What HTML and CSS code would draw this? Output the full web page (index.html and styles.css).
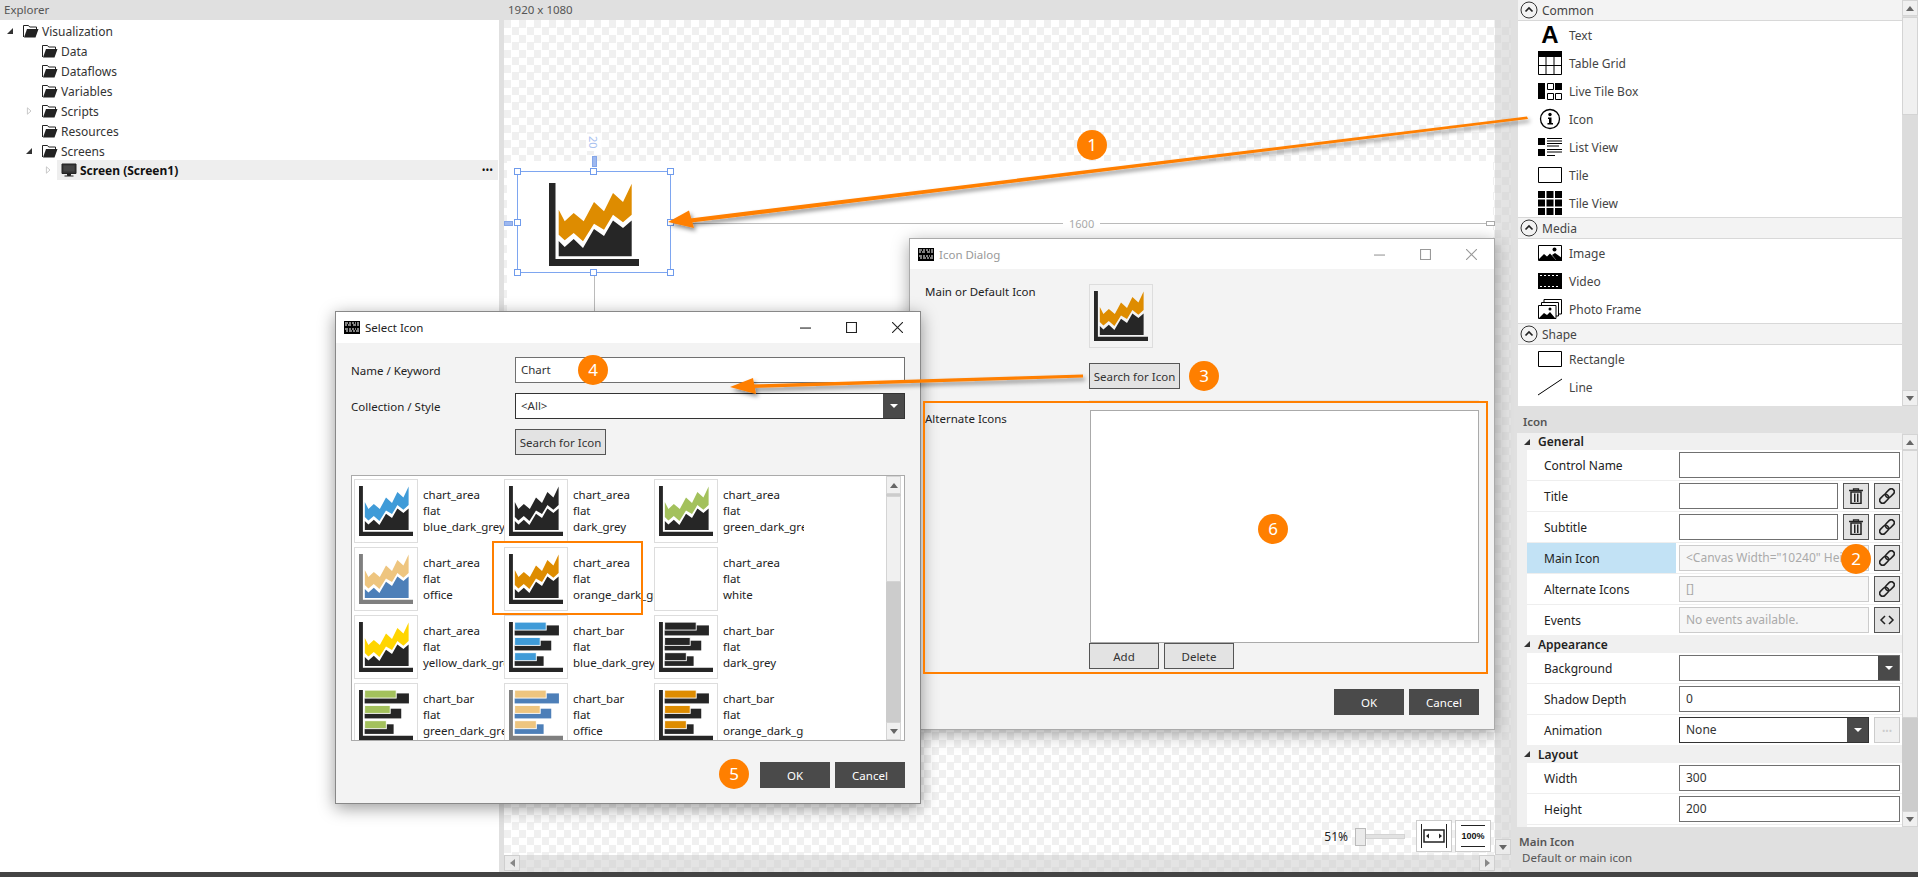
FILE: index.html
```html
<!DOCTYPE html>
<html lang="en">
<head>
  <meta charset="UTF-8">
  <title>Icon Dialog</title>
  <link rel="stylesheet" href="styles.css">
</head>
<body>
  <svg class="defs" width="0" height="0">
    <symbol id="chart-area" viewBox="0 0 90 83">
      <path class="c-axis" d="M0 0h6.5v76H90v7H0z"/>
      <path class="c-top" d="M9.7 26.7l6 11.6 9-8.3 10 8.3L45 19l10 9.3L64 10l10 9 8.7-18.3v31L74 39.3l-10-7.600-9 15-10-6-11 17.600-9.300-8.300-9 7.300-6-5.600z"/>
      <path class="c-base" d="M9.7 58l6 6 9-8 9.300 9L45 46l10 7 9-15.500L74 45l8.700-7.500v35.800H9.700z"/>
    </symbol>
    <symbol id="chart-bar" viewBox="0 0 90 83">
      <path class="c-axis" d="M0 0h6.5v76H90v7H0z"/>
      <rect class="c-base" x="9.4" y="5.5" width="73.8" height="16.7"/>
      <rect class="c-base" x="9.4" y="31" width="61" height="16.2"/>
      <rect class="c-base" x="9.4" y="57" width="48.3" height="16"/>
      <rect class="c-top c-edge" x="9.4" y="0" width="52.6" height="13.3"/>
      <rect class="c-top c-edge" x="9.4" y="25.5" width="42.6" height="13.3"/>
      <rect class="c-top c-edge" x="9.4" y="51" width="36.1" height="13.3"/>
    </symbol>
    <symbol id="folder" viewBox="0 0 16 14">
      <path d="M.5 13V1.500h5l1.200 1.500h6.800v2" fill="none" stroke="#222"/>
      <path d="M4 5h11.500l-3 8.500H1z" fill="#222"/>
    </symbol>
    <symbol id="logo" viewBox="0 0 16 13">
      <rect width="16" height="13" fill="#000"/>
      <path d="M1 2h3M5 2h2M8 2h2M11 2h1M13 2h2M1 4h2M4 4h3M9 4h3M13 4h2M1 8h3M5 8h2M8 8h2M11 8h1M13 8h2M2 10h2M5 10h3M9 10h2M12 10h3" stroke="#fff" fill="none"/>
    </symbol>
    <symbol id="link" viewBox="0 0 16 16">
      <g transform="rotate(-45 8 8)" fill="none" stroke="#222" stroke-width="1.6">
        <rect x="-1" y="5" width="10" height="6" rx="3"/>
        <rect x="7" y="5" width="10" height="6" rx="3"/>
      </g>
    </symbol>
    <symbol id="trash" viewBox="0 0 16 16">
      <path d="M1 2.500h14M5.500 2V.8h5V2" fill="none" stroke="#222" stroke-width="1.3"/>
      <path d="M3 4h10v11.500H3z" fill="none" stroke="#222" stroke-width="1.5"/>
      <path d="M6 5.500h1.500v8.500H6zM9 5.500h1.500v8.500H9z" fill="#222"/>
    </symbol>
    <symbol id="chevron" viewBox="0 0 18 18">
      <circle cx="9" cy="9" r="8" fill="none" stroke="#333"/>
      <path d="M5.500 10.500L9 7l3.500 3.500" fill="none" stroke="#222" stroke-width="1.7"/>
    </symbol>
    <symbol id="arrow-open" viewBox="0 0 8 8"><path d="M7 1v6H1z" fill="#333"/></symbol>
    <symbol id="arrow-closed" viewBox="0 0 8 10"><path d="M2 1l4.500 4L2 9z" fill="#fff" stroke="#bbb"/></symbol>
  </svg>

  <div class="app">
    <section class="explorer">
      <div class="pane-title">Explorer</div>
      <ul class="tree">
        <li class="node"><svg class="exp"><use href="#arrow-open"/></svg><svg class="folder"><use href="#folder"/></svg>Visualization</li>
        <li class="node d1"><span class="exp"></span><svg class="folder"><use href="#folder"/></svg>Data</li>
        <li class="node d1"><span class="exp"></span><svg class="folder"><use href="#folder"/></svg>Dataflows</li>
        <li class="node d1"><span class="exp"></span><svg class="folder"><use href="#folder"/></svg>Variables</li>
        <li class="node d1"><svg class="exp"><use href="#arrow-closed"/></svg><svg class="folder"><use href="#folder"/></svg>Scripts</li>
        <li class="node d1"><span class="exp"></span><svg class="folder"><use href="#folder"/></svg>Resources</li>
        <li class="node d1"><svg class="exp"><use href="#arrow-open"/></svg><svg class="folder"><use href="#folder"/></svg>Screens</li>
        <li class="node d2">
          <svg class="exp"><use href="#arrow-closed"/></svg>
          <div class="node-sel">
            <svg class="monitor" viewBox="0 0 16 14"><path d="M1 1h14v9.500H1z" fill="#333" stroke="#222"/><path d="M2.500 2.500h11v6h-11z" fill="#444"/><path d="M6.500 11h3v1.500h-3zM3.500 13h9" stroke="#222" fill="#222"/></svg>
            <b>Screen (Screen1)</b>
            <span class="dots">•••</span>
          </div>
        </li>
      </ul>
    </section>

    <section class="center">
      <div class="pane-title">1920 x 1080</div>
      <div class="stage">
        <div class="artboard"></div>
        <span class="guide-label">20</span>
        <span class="pill pill-top"></span>
        <span class="pill pill-left"></span>
        <span class="rule rule-h"></span>
        <span class="rule rule-v"></span>
        <span class="rule-text">1600</span>
        <span class="pill pill-right"></span>
        <div class="selection">
          <i class="h h-tl"></i><i class="h h-tc"></i><i class="h h-tr"></i>
          <i class="h h-ml"></i><i class="h h-mr"></i>
          <i class="h h-bl"></i><i class="h h-bc"></i><i class="h h-br"></i>
        </div>
        <svg class="chart chart-main c-orange"><use href="#chart-area"/></svg>

        <div class="zoombar">
          <span class="zoom-val">51%</span>
          <div class="slider"><span class="slider-thumb"></span></div>
          <div class="zoom-btn">
            <svg width="26" height="26" viewBox="0 0 26 26"><path d="M.5 1v24M25.500 1v24" stroke="#222"/><rect x="3" y="7" width="20" height="12" fill="#fff" stroke="#222" stroke-width="1.5"/><path d="M5 13l3-2.500v5zM21 13l-3-2.500v5z" fill="#222"/></svg>
          </div>
          <div class="zoom-btn zoom-full">100%</div>
        </div>

        <div class="hbar"><span class="sb-btn"><i class="tri tri-l"></i></span><span class="sb-btn"><i class="tri tri-r"></i></span></div>
        <div class="vbar"><span class="sb-btn"><i class="tri tri-d"></i></span></div>
      </div>
    </section>

    <aside class="side">
      <div class="toolbox">
        <div class="tool-list">
          <div class="tool-head"><svg class="chev"><use href="#chevron"/></svg>Common</div>
          <div class="tool"><span class="tool-a">A</span>Text</div>
          <div class="tool"><svg class="tool-ico" viewBox="0 0 24 24"><path d="M0 0h24v6H0z"/><path d="M.5 6v17.500h23V6M8 6v17.500M16 6v17.500M.5 14.500h23" fill="none" stroke="#000"/></svg>Table Grid</div>
          <div class="tool"><svg class="tool-ico" viewBox="0 0 24 24"><path d="M0 4h7v16H0z"/><path d="M9.500 4.500h6v6h-6zM9.500 14.500h6v6h-6zM17.500 14.500h6v6h-6z" fill="none" stroke="#000"/><path d="M17 4h7v7h-7z"/></svg>Live Tile Box</div>
          <div class="tool"><svg class="tool-ico" viewBox="0 0 24 24"><circle cx="12" cy="12" r="9.500" fill="none" stroke="#000" stroke-width="1.3"/><circle cx="12" cy="7.500" r="1.7"/><path d="M10 10.500h3.500V16H15v1.500H9.500V16H11v-4h-1z"/></svg>Icon</div>
          <div class="tool"><svg class="tool-ico" viewBox="0 0 24 24"><path d="M0 3h7v7H0zM0 14h7v7H0z"/><path d="M9 3.500h15M9 6h15M9 8.500h15M9 11h12M9 14.500h15M9 17h15M9 20.500h8" fill="none" stroke="#000"/></svg>List View</div>
          <div class="tool"><svg class="tool-ico" viewBox="0 0 24 24"><path d="M.5 4.500h23v15H.5z" fill="none" stroke="#000"/></svg>Tile</div>
          <div class="tool"><svg class="tool-ico" viewBox="0 0 24 24"><path d="M0 0h7v7H0zM8.500 0h7v7h-7zM17 0h7v7h-7zM0 8.500h7v7H0zM8.500 8.500h7v7h-7zM17 8.500h7v7h-7zM0 17h7v7H0zM8.500 17h7v7h-7zM17 17h7v7h-7z"/></svg>Tile View</div>
          <div class="tool-head"><svg class="chev"><use href="#chevron"/></svg>Media</div>
          <div class="tool"><svg class="tool-ico" viewBox="0 0 24 24"><path d="M.5 4.500h23v15H.5z" fill="none" stroke="#000"/><path d="M0 19l6-6 3 2.500 3-3 6 6.500H0z"/><circle cx="16.500" cy="8.500" r="2"/><path d="M14 14l3-2 7 5v3h-5z"/></svg>Image</div>
          <div class="tool"><svg class="tool-ico" viewBox="0 0 24 24"><path d="M0 4h24v16H0z"/><path d="M2 6.500h2M6 6.500h2M10 6.500h2M14 6.500h2M18 6.500h2M2 17.500h2M6 17.500h2M10 17.500h2M14 17.500h2M18 17.500h2" stroke="#fff" fill="none"/></svg>Video</div>
          <div class="tool"><svg class="tool-ico" viewBox="0 0 24 24"><path d="M6 5V2.500h17.500V17H21" fill="none" stroke="#000"/><path d="M3.500 8V5.500h17V19H18" fill="none" stroke="#000"/><path d="M.5 8.500h17.500v13H.5z" fill="#fff" stroke="#000"/><path d="M1 21l5-5 3 2 3-3 5 6z"/><circle cx="12" cy="12" r="1.5"/></svg>Photo Frame</div>
          <div class="tool-head"><svg class="chev"><use href="#chevron"/></svg>Shape</div>
          <div class="tool"><svg class="tool-ico" viewBox="0 0 24 24"><path d="M.5 4.500h23v15H.5z" fill="none" stroke="#000"/></svg>Rectangle</div>
          <div class="tool"><svg class="tool-ico" viewBox="0 0 24 24"><path d="M0 20L24 4" fill="none" stroke="#000"/></svg>Line</div>
        </div>
        <div class="vscroll">
          <span class="sb-btn"><i class="tri tri-u"></i></span>
          <span class="sb-thumb thumb-tools"></span>
          <span class="sb-track"></span>
          <span class="sb-btn"><i class="tri tri-d"></i></span>
        </div>
      </div>

      <div class="props-title">Icon</div>
      <div class="props">
        <div class="props-body">
          <div class="cat"><svg class="cat-arrow"><use href="#arrow-open"/></svg>General</div>
          <div class="row"><label>Control Name</label><div class="val"><div class="field"></div></div></div>
          <div class="row"><label>Title</label><div class="val"><div class="field"></div><span class="sq"><svg><use href="#trash"/></svg></span><span class="sq"><svg><use href="#link"/></svg></span></div></div>
          <div class="row"><label>Subtitle</label><div class="val"><div class="field"></div><span class="sq"><svg><use href="#trash"/></svg></span><span class="sq"><svg><use href="#link"/></svg></span></div></div>
          <div class="row row-on"><label>Main Icon</label><div class="val"><div class="field off">&lt;Canvas Width="10240" Heig</div><span class="sq"><svg><use href="#link"/></svg></span></div></div>
          <div class="row"><label>Alternate Icons</label><div class="val"><div class="field off">[]</div><span class="sq"><svg><use href="#link"/></svg></span></div></div>
          <div class="row row-last"><label>Events</label><div class="val"><div class="field off">No events available.</div><span class="sq"><svg viewBox="0 0 16 16"><path d="M6 4L2 8l4 4M10 4l4 4-4 4" fill="none" stroke="#222" stroke-width="1.5"/></svg></span></div></div>
          <div class="cat cat-tall"><svg class="cat-arrow"><use href="#arrow-open"/></svg>Appearance</div>
          <div class="row"><label>Background</label><div class="val"><div class="field field-drop"><span class="drop"><i class="tri-w"></i></span></div></div></div>
          <div class="row"><label>Shadow Depth</label><div class="val"><div class="field">0</div></div></div>
          <div class="row row-last"><label>Animation</label><div class="val"><div class="field field-drop field-dark">None<span class="drop"><i class="tri-w"></i></span></div><span class="sq sq-off">•••</span></div></div>
          <div class="cat cat-tall"><svg class="cat-arrow"><use href="#arrow-open"/></svg>Layout</div>
          <div class="row"><label>Width</label><div class="val"><div class="field">300</div></div></div>
          <div class="row"><label>Height</label><div class="val"><div class="field">200</div></div></div>
          <div class="row"><label></label><div class="val"><div class="field"></div></div></div>
        </div>
        <div class="vscroll vscroll-props">
          <span class="sb-btn"><i class="tri tri-u"></i></span>
          <span class="sb-thumb thumb-props"></span>
          <span class="sb-track"></span>
          <span class="sb-btn"><i class="tri tri-d"></i></span>
        </div>
      </div>
      <div class="help">
        <strong>Main Icon</strong>
        <span>Default or main icon</span>
      </div>
    </aside>
  </div>
  <div class="statusbar"></div>

  <!-- Icon Dialog, behind -->
  <div class="dialog dialog-icon">
    <header class="titlebar titlebar-off">
      <svg class="logo"><use href="#logo"/></svg>
      <span class="title-text">Icon Dialog</span>
      <div class="winctl">
        <svg viewBox="0 0 10 10"><path d="M0 5.500h10" stroke="currentColor"/></svg>
        <svg viewBox="0 0 10 10"><path d="M.5.500h9v9h-9z" fill="none" stroke="currentColor"/></svg>
        <svg viewBox="0 0 10 10"><path d="M0 0l10 10M10 0L0 10" stroke="currentColor"/></svg>
      </div>
    </header>
    <div class="icon-body">
      <div class="icon-main">
        <span class="lbl">Main or Default Icon</span>
        <div class="main-col">
          <div class="thumb thumb-gray"><svg class="chart c-orange"><use href="#chart-area"/></svg></div>
          <button class="btn btn-search">Search for Icon</button>
        </div>
      </div>
      <div class="icon-alt">
        <span class="lbl">Alternate Icons</span>
        <div class="alt-list"></div>
        <div class="alt-btns"><button class="btn btn-wide">Add</button><button class="btn btn-wide">Delete</button></div>
      </div>
      <div class="dlg-actions"><button class="btn-dark">OK</button><button class="btn-dark">Cancel</button></div>
    </div>
  </div>

  <!-- Select Icon, in front -->
  <div class="dialog dialog-select">
    <header class="titlebar">
      <svg class="logo"><use href="#logo"/></svg>
      <span class="title-text">Select Icon</span>
      <div class="winctl">
        <svg viewBox="0 0 10 10"><path d="M0 5.500h10" stroke="currentColor"/></svg>
        <svg viewBox="0 0 10 10"><path d="M.5.500h9v9h-9z" fill="none" stroke="currentColor"/></svg>
        <svg viewBox="0 0 10 10"><path d="M0 0l10 10M10 0L0 10" stroke="currentColor"/></svg>
      </div>
    </header>
    <div class="select-body">
      <div class="select-form">
        <span class="lbl">Name / Keyword</span>
        <div class="field">Chart</div>
        <span class="lbl">Collection / Style</span>
        <div class="field field-drop field-dark">&lt;All&gt;<span class="drop"><i class="tri-w"></i></span></div>
        <span></span>
        <div><button class="btn btn-search">Search for Icon</button></div>
      </div>
      <div class="results">
        <div class="result-grid">
          <div class="item"><div class="thumb"><svg class="chart c-blue"><use href="#chart-area"/></svg></div><p>chart_area<br>flat<br>blue_dark_grey</p></div>
          <div class="item"><div class="thumb"><svg class="chart c-dark"><use href="#chart-area"/></svg></div><p>chart_area<br>flat<br>dark_grey</p></div>
          <div class="item"><div class="thumb"><svg class="chart c-green"><use href="#chart-area"/></svg></div><p>chart_area<br>flat<br>green_dark_grey</p></div>
          <div class="item"><div class="thumb"><svg class="chart c-office"><use href="#chart-area"/></svg></div><p>chart_area<br>flat<br>office</p></div>
          <div class="item"><div class="thumb"><svg class="chart c-orange"><use href="#chart-area"/></svg></div><p>chart_area<br>flat<br>orange_dark_grey</p></div>
          <div class="item"><div class="thumb"></div><p>chart_area<br>flat<br>white</p></div>
          <div class="item"><div class="thumb"><svg class="chart c-yellow"><use href="#chart-area"/></svg></div><p>chart_area<br>flat<br>yellow_dark_grey</p></div>
          <div class="item"><div class="thumb"><svg class="chart c-blue"><use href="#chart-bar"/></svg></div><p>chart_bar<br>flat<br>blue_dark_grey</p></div>
          <div class="item"><div class="thumb"><svg class="chart c-dark"><use href="#chart-bar"/></svg></div><p>chart_bar<br>flat<br>dark_grey</p></div>
          <div class="item"><div class="thumb"><svg class="chart c-green"><use href="#chart-bar"/></svg></div><p>chart_bar<br>flat<br>green_dark_grey</p></div>
          <div class="item"><div class="thumb"><svg class="chart c-office"><use href="#chart-bar"/></svg></div><p>chart_bar<br>flat<br>office</p></div>
          <div class="item"><div class="thumb"><svg class="chart c-orange"><use href="#chart-bar"/></svg></div><p>chart_bar<br>flat<br>orange_dark_grey</p></div>
        </div>
        <div class="vscroll vscroll-results">
          <span class="sb-btn"><i class="tri tri-u"></i></span>
          <span class="sb-thumb thumb-results"></span>
          <span class="sb-track"></span>
          <span class="sb-btn"><i class="tri tri-d"></i></span>
        </div>
      </div>
      <div class="dlg-actions"><button class="btn-dark">OK</button><button class="btn-dark">Cancel</button></div>
    </div>
  </div>

  <!-- orange annotations over the screenshot -->
  <div class="mark mark-item"></div>
  <div class="mark mark-alt"></div>
  <svg class="arrows" viewBox="0 0 1918 877">
    <defs>
      <filter id="soft" x="-5%" y="-30%" width="110%" height="170%">
        <feDropShadow dx="2" dy="3" stdDeviation="2" flood-color="#000" flood-opacity=".45"/>
      </filter>
    </defs>
    <g class="arrow" filter="url(#soft)">
      <path d="M1527 116.500L690 218.500l1.500 4L1528 119z"/>
      <path d="M668 222l21-11.500 5 17.500z"/>
    </g>
    <g class="arrow" filter="url(#soft)">
      <path d="M1083 374.500L752 384.500v3.500L1083 377.500z"/>
      <path d="M730 387l23-9 3 16z"/>
    </g>
  </svg>
  <span class="badge b1">1</span>
  <span class="badge b2">2</span>
  <span class="badge b3">3</span>
  <span class="badge b4">4</span>
  <span class="badge b5">5</span>
  <span class="badge b6">6</span>
</body>
</html>
```

FILE: styles.css
```css
html, body {
  margin: 0;
  padding: 0;
  height: 877px;
  overflow: hidden;
  background: #e0e0e0;
  font-family: "Noto Sans", "Liberation Sans", sans-serif;
  font-size: 11.5px;
  color: #222;
}

.defs {
  position: absolute;
}

.app {
  display: flex;
  height: 872px;
}

.statusbar {
  height: 5px;
  background: #444;
}

.pane-title {
  height: 20px;
  line-height: 20px;
  padding-left: 4px;
  color: #555;
  background: #e0e0e0;
}

/* explorer */
.explorer {
  width: 499px;
  background: #fff;
  margin-right: 5px;
}

.tree {
  list-style: none;
  margin: 0;
  padding: 0;
}

.node {
  display: flex;
  align-items: center;
  height: 20px;
  padding: 2px 0 0 6px;
  box-sizing: border-box;
  font-size: 12px;
  color: #333;
}

.node.d1 { padding-left: 25px; }
.node.d2 { padding-left: 44px; padding-top: 0; }

.exp {
  width: 8px;
  height: 8px;
  margin-right: 9px;
  flex: none;
}

.folder {
  width: 16px;
  height: 14px;
  margin-right: 3px;
  flex: none;
}

.d2 .exp {
  margin-right: 5px;
}

.node-sel {
  flex: 1;
  display: flex;
  align-items: center;
  height: 20px;
  margin-right: 1px;
  padding-left: 4px;
  background: #eee;
  color: #111;
}

.monitor {
  width: 16px;
  height: 14px;
  margin-right: 3px;
}

.dots {
  margin-left: auto;
  margin-right: 5px;
  font-size: 10px;
}

/* canvas */
.center {
  width: 1007px;
  margin-right: 1px;
  display: flex;
  flex-direction: column;
}

.stage {
  flex: 1;
  position: relative;
  overflow: hidden;
  background: conic-gradient(#fff 25%, #f0f0f0 0 50%, #fff 0 75%, #f0f0f0 0) 0 0 / 15px 15px;
}

.artboard {
  position: absolute;
  left: 3px;
  top: 141px;
  width: 986px;
  height: 556px;
  background: #fff;
}

.guide-label {
  position: absolute;
  left: 83px;
  top: 114px;
  width: 14px;
  padding: 2px 0;
  text-align: center;
  font-size: 11px;
  color: #a9c2ef;
  writing-mode: vertical-rl;
  background: #fff;
}

.pill {
  position: absolute;
  background: #9db8ef;
  border: 1px solid #84a5e8;
  box-sizing: border-box;
}

.pill-top { left: 88px; top: 136px; width: 5px; height: 11px; }
.pill-left { left: 0; top: 201px; width: 9px; height: 5px; }
.pill-right { left: 982px; top: 201px; width: 9px; height: 5px; background: #fff; border-color: #aaa; }

.rule {
  position: absolute;
  background: #bbb;
}

.rule-h { left: 167px; top: 203px; width: 815px; height: 1px; }
.rule-v { left: 90px; top: 253px; width: 1px; height: 60px; }

.rule-text {
  position: absolute;
  left: 559px;
  top: 196px;
  padding: 0 6px;
  font-size: 11px;
  color: #aaa;
  background: #fff;
}

.selection {
  position: absolute;
  left: 13px;
  top: 151px;
  width: 152px;
  height: 100px;
  border: 1px solid #7ea6f0;
}

.h {
  position: absolute;
  box-sizing: border-box;
  width: 7px;
  height: 7px;
  background: #fff;
  border: 1px solid #6f9bec;
}

.h-tl, .h-ml, .h-bl { left: -4px; }
.h-tc, .h-bc { left: 72px; }
.h-tr, .h-mr, .h-br { right: -4px; }
.h-tl, .h-tc, .h-tr { top: -4px; }
.h-ml, .h-mr { top: 47px; }
.h-bl, .h-bc, .h-br { bottom: -4px; }

.chart {
  display: block;
  width: 54px;
  height: 50px;
}

.chart-main {
  position: absolute;
  left: 45px;
  top: 163px;
  width: 90px;
  height: 83px;
}

.c-axis { fill: var(--axis, #262626); }
.c-top { fill: var(--top); }
.c-base { fill: var(--base, #262626); }
.c-edge { stroke: #fff; stroke-width: 1.5; }

.c-blue { --top: #3f9bd8; }
.c-dark { --top: #262626; }
.c-green { --top: #a3c15c; }
.c-orange { --top: #de8c00; }
.c-yellow { --top: #ffd500; }
.c-office { --top: #eec57f; --base: #4d7fb8; --axis: #7f7f7f; }

.zoombar {
  position: absolute;
  right: 20px;
  bottom: 20px;
  display: flex;
  align-items: center;
}

.zoom-val {
  font-size: 12px;
  margin-right: 7px;
}

.slider {
  position: relative;
  width: 50px;
  height: 5px;
  margin-right: 8px;
  background: #e2e2e2;
  border: 1px solid #d4d4d4;
  box-sizing: border-box;
}

.slider-thumb {
  position: absolute;
  left: -1px;
  top: -7px;
  width: 11px;
  height: 18px;
  box-sizing: border-box;
  background: #eaeaea;
  border: 1px solid #bbb;
}

.zoom-btn {
  width: 36px;
  height: 32px;
  margin-left: 3px;
  box-sizing: border-box;
  display: flex;
  align-items: center;
  justify-content: center;
  background: #fff;
  border: 1px solid #ccc;
}

.zoom-full {
  font: bold 9px "Liberation Sans", sans-serif;
  color: #111;
  background: linear-gradient(#222, #222) 50% 4px / 24px 1px no-repeat,
    linear-gradient(#222, #222) 50% 25px / 24px 1px no-repeat,
    #fff;
}

.hbar {
  position: absolute;
  left: 0;
  right: 0;
  bottom: 0;
  height: 17px;
  padding-right: 16px;
  display: flex;
  justify-content: space-between;
  background: rgba(205, 205, 205, .55);
}

.vbar {
  position: absolute;
  right: 0;
  top: 0;
  bottom: 17px;
  width: 16px;
  display: flex;
  align-items: flex-end;
  background: rgba(205, 205, 205, .55);
}

.hbar .sb-btn, .vbar .sb-btn {
  background: rgba(240, 240, 240, .7);
  border-color: rgba(200, 200, 200, .8);
}

/* scrollbars */
.vscroll {
  width: 16px;
  flex: none;
  display: flex;
  flex-direction: column;
  background: #dcdcdc;
}

.sb-btn {
  flex: none;
  width: 16px;
  height: 16px;
  box-sizing: border-box;
  display: flex;
  align-items: center;
  justify-content: center;
  background: #f0f0f0;
  border: 1px solid #d4d4d4;
}

.sb-thumb {
  flex: none;
  box-sizing: border-box;
  background: #f0f0f0;
  border: 1px solid #d4d4d4;
}

.sb-track {
  flex: 1;
}

.thumb-tools { height: 98px; margin-top: 1px; }
.thumb-props { height: 268px; }
.thumb-results { height: 86px; margin-top: 2px; }

.tri {
  width: 0;
  height: 0;
  border: 4px solid transparent;
}

.tri-u { border-bottom: 5px solid #666; border-top: 0; }
.tri-d { border-top: 5px solid #666; border-bottom: 0; }
.tri-l { border-right: 5px solid #888; border-left: 0; }
.tri-r { border-left: 5px solid #888; border-right: 0; }

/* right side */
.side {
  width: 401px;
  padding-left: 5px;
  display: flex;
  flex-direction: column;
}

.toolbox {
  display: flex;
  height: 406px;
  margin-left: 1px;
}

.tool-list {
  flex: 1;
  background: #fff;
  color: #444;
  font-size: 12px;
}

.tool-head {
  display: flex;
  align-items: center;
  height: 20px;
  padding-left: 2px;
  background: #f3f3f3;
  border-bottom: 1px solid #d8d8d8;
}

.tool + .tool-head {
  border-top: 1px solid #d8d8d8;
}

.chev {
  width: 18px;
  height: 18px;
  margin-right: 4px;
}

.tool {
  display: flex;
  align-items: center;
  height: 28px;
  padding-left: 20px;
}

.tool-ico {
  width: 24px;
  height: 24px;
  margin-right: 7px;
  flex: none;
}

.tool-a {
  width: 24px;
  margin-right: 7px;
  text-align: center;
  font: bold 24px/24px "Liberation Sans", sans-serif;
  color: #000;
}

.props-title {
  height: 27px;
  line-height: 32px;
  padding-left: 6px;
  font-weight: 600;
  color: #555;
}

.props {
  display: flex;
  height: 394px;
}

.props-body {
  flex: 1;
  min-width: 0;
  overflow: hidden;
  background: #f0f0f0;
  font-size: 12px;
}

.vscroll-props {
  background: #ccc;
  margin-top: 1px;
}

.cat {
  display: flex;
  align-items: center;
  height: 17px;
  padding-left: 6px;
  font-weight: 600;
  background: #f0f0f0;
}

.cat-tall {
  height: 18px;
}

.cat-arrow {
  width: 8px;
  height: 8px;
  margin-right: 7px;
}

.row {
  display: flex;
  height: 31px;
  margin-left: 10px;
  background: #fff;
  box-sizing: border-box;
  border-bottom: 1px solid #eee;
}

.row-last {
  height: 30px;
  border-bottom: 0;
}

.row label {
  flex: none;
  width: 149px;
  margin-right: 1px;
  padding-left: 17px;
  box-sizing: border-box;
  line-height: 31px;
}

.row-on label {
  background: #c2e2f5;
}

.val {
  flex: 1;
  min-width: 0;
  display: flex;
  gap: 5px;
  padding: 2px 2px 0 2px;
}

.field {
  flex: 1;
  position: relative;
  min-width: 0;
  height: 26px;
  box-sizing: border-box;
  padding-left: 6px;
  overflow: hidden;
  white-space: nowrap;
  line-height: 24px;
  font-size: 12px;
  color: #333;
  background: #fff;
  border: 1px solid #707070;
}

.field.off {
  color: #aaa;
  background: #f6f6f6;
  border-color: #ccc;
}

.field-dark {
  border-color: #333;
}

.drop {
  position: absolute;
  right: 0;
  top: 0;
  bottom: 0;
  width: 21px;
  display: flex;
  align-items: center;
  justify-content: center;
  background: #4a4a4a;
}

.tri-w {
  width: 0;
  height: 0;
  border: 4px solid transparent;
  border-top: 4px solid #fff;
  border-bottom: 0;
}

.sq {
  flex: none;
  width: 26px;
  height: 26px;
  box-sizing: border-box;
  display: flex;
  align-items: center;
  justify-content: center;
  background: #e3e3e3;
  border: 1px solid #555;
}

.sq svg {
  width: 16px;
  height: 16px;
}

.sq-off {
  color: #ccc;
  font-size: 9px;
  background: #f0f0f0;
  border-color: #ccc;
}

.help {
  flex: 1;
  display: flex;
  flex-direction: column;
  gap: 1px;
  padding: 7px 0 0 2px;
  color: #555;
}

.help strong {
  font-weight: 600;
}

.help span {
  padding-left: 3px;
}

/* dialogs */
.dialog {
  position: absolute;
  box-sizing: border-box;
  display: flex;
  flex-direction: column;
  background: #f3f3f3;
}

.dialog-icon {
  left: 909px;
  top: 238px;
  width: 586px;
  height: 492px;
  border: 1px solid #aaa;
  box-shadow: 0 4px 16px rgba(0, 0, 0, .35);
}

.dialog-select {
  left: 335px;
  top: 311px;
  width: 586px;
  height: 493px;
  border: 1px solid #888;
  box-shadow: 0 4px 16px rgba(0, 0, 0, .4);
}

.titlebar {
  height: 30px;
  flex: none;
  display: flex;
  align-items: center;
  padding-left: 8px;
  background: #fff;
  color: #222;
}

.dialog-select .titlebar {
  height: 31px;
}

.titlebar-off {
  color: #999;
}

.logo {
  width: 16px;
  height: 13px;
  margin-right: 5px;
}

.winctl {
  margin-left: auto;
  display: flex;
  gap: 35px;
  padding-right: 17px;
}

.winctl svg {
  width: 11px;
  height: 11px;
}

.lbl {
  color: #222;
}

.btn, .btn-dark {
  font: inherit;
  height: 26px;
  padding: 0;
  box-sizing: border-box;
}

.btn {
  background: #e3e3e3;
  border: 1px solid #555;
  color: #333;
}

.btn-search { width: 91px; }
.btn-wide { width: 70px; }

.btn-dark {
  width: 70px;
  border: 0;
  color: #fff;
  background: #4a4a4a;
}

.dlg-actions {
  display: flex;
  justify-content: flex-end;
  gap: 5px;
}

.thumb {
  width: 64px;
  height: 64px;
  flex: none;
  box-sizing: border-box;
  display: flex;
  align-items: center;
  justify-content: center;
  background: #fff;
  border: 1px solid #ddd;
}

.thumb-gray {
  background: #f3f3f3;
}

/* Icon dialog body */
.icon-body {
  flex: 1;
  display: flex;
  flex-direction: column;
  padding: 15px 15px 0;
}

.icon-main {
  display: grid;
  grid-template-columns: 164px 1fr;
  height: 115px;
}

.main-col {
  display: flex;
  flex-direction: column;
  gap: 15px;
}

.icon-alt {
  display: grid;
  grid-template-columns: 164px 1fr;
  grid-template-rows: 233px 26px;
  padding-top: 10px;
  background: linear-gradient(#e4e4e4, #e4e4e4) 164px 0 / 100% 1px no-repeat;
  border-top: 1px solid transparent;
}

.icon-alt .lbl {
  padding-top: 1px;
}

.alt-list {
  box-sizing: border-box;
  margin-left: 1px;
  background: #fff;
  border: 1px solid #aaa;
}

.alt-btns {
  grid-column: 2;
  display: flex;
  gap: 5px;
}

.icon-body .dlg-actions {
  margin-top: 20px;
}

/* Select Icon body */
.select-body {
  flex: 1;
  display: flex;
  flex-direction: column;
  padding: 14px 15px 0;
}

.select-form {
  display: grid;
  grid-template-columns: 164px 1fr;
  grid-auto-rows: 26px;
  row-gap: 10px;
  align-items: center;
}

.select-form .field {
  padding-left: 5px;
  font-size: 11.5px;
}

.results {
  display: flex;
  height: 266px;
  margin-top: 20px;
  box-sizing: border-box;
  padding-right: 3px;
  overflow: hidden;
  background: #fff;
  border: 1px solid #aaa;
}

.result-grid {
  flex: 1;
  display: grid;
  grid-template-columns: repeat(3, 150px);
  grid-auto-rows: 68px;
  padding: 3px 0 0 2px;
  overflow: hidden;
}

.vscroll-results {
  width: 15px;
  background: #ccc;
}

.vscroll-results .sb-btn {
  width: 15px;
  height: 18px;
}

.item {
  display: flex;
  align-items: center;
  overflow: hidden;
  height: 64px;
}

.item p {
  margin: 0 0 0 5px;
  white-space: nowrap;
  line-height: 16px;
  color: #222;
}

.select-body .dlg-actions {
  margin-top: 21px;
}

/* annotations */
.mark {
  position: absolute;
  box-sizing: border-box;
  border: 2px solid #ff7f00;
}

.mark-item { left: 492px; top: 541px; width: 151px; height: 74px; }
.mark-alt { left: 923px; top: 401px; width: 565px; height: 273px; }

.arrows {
  position: absolute;
  left: 0;
  top: 0;
  width: 1918px;
  height: 877px;
  pointer-events: none;
}

.arrow path {
  fill: #ff7f00;
}

.badge {
  position: absolute;
  width: 30px;
  height: 30px;
  line-height: 29px;
  border-radius: 50%;
  text-align: center;
  font-size: 17px;
  color: #fff;
  background: #ff7f00;
}

.b1 { left: 1077px; top: 130px; }
.b2 { left: 1841px; top: 544px; }
.b3 { left: 1189px; top: 361px; }
.b4 { left: 578px; top: 355px; }
.b5 { left: 719px; top: 759px; }
.b6 { left: 1258px; top: 514px; }
```
